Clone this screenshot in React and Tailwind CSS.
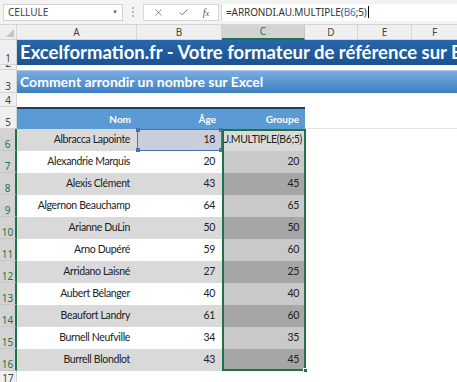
import { X, Check } from 'lucide-react';

const rows = [
  ['Albracca Lapointe', 18, null],
  ['Alexandrie Marquis', 20, 20],
  ['Alexis Clément', 43, 45],
  ['Algernon Beauchamp', 64, 65],
  ['Arianne DuLin', 50, 50],
  ['Arno Dupéré', 59, 60],
  ['Arridano Laisné', 27, 25],
  ['Aubert Bélanger', 40, 40],
  ['Beaufort Landry', 61, 60],
  ['Burnell Neufville', 34, 35],
  ['Burrell Blondlot', 43, 45],
];

const RowHead = ({ n, h, sel }) => (
  <div
    className={`w-[17px] shrink-0 flex items-end justify-center text-[10px] leading-none pb-[1px] overflow-hidden border-b border-r ${
      sel ? 'bg-[#d3d3d3] text-[#217346] border-b-[#c6c6c6] border-r-[#217346] border-r-2' : 'bg-[#efefef] text-[#444] border-[#d4d4d4]'
    } ${h}`}
  >
    {n}
  </div>
);

export default function App() {
  const cell = 'font-["Lato",sans-serif] text-[10.5px] tracking-[-0.35px] text-[#222]';
  return (
    <div className='w-[457px] h-[382px] overflow-hidden bg-white font-["Noto_Sans",sans-serif] select-none'>
      {/* formula toolbar */}
      <div className="h-[25px] bg-[#f3f3f3] flex items-center pl-[3px] gap-[2px] border-b border-[#d6d6d6]">
        <div className="w-[120px] h-[17px] bg-white border border-[#d0d0d0] flex items-center justify-between px-[4px]">
          <span className="text-[10px] text-[#444]">CELLULE</span>
          <span className="text-[6px] text-[#666]">▼</span>
        </div>
        <div className="w-[16px] flex flex-col items-center gap-[2px]">
          <span className="w-[2px] h-[2px] bg-[#b8b8b8]" />
          <span className="w-[2px] h-[2px] bg-[#b8b8b8]" />
          <span className="w-[2px] h-[2px] bg-[#b8b8b8]" />
        </div>
        <div className="w-[76px] h-[17px] bg-white border border-[#d8d8d8] flex items-center justify-around px-[2px] text-[#555]">
          <X size={11} strokeWidth={1.5} />
          <Check size={11} strokeWidth={1.8} />
          <span className="font-['Liberation_Serif',serif] italic text-[10px]">f<span className="text-[8px]">x</span></span>
        </div>
        <div className="flex-1 h-[17px] bg-white border-l border-[#d8d8d8] flex items-center pl-[4px] text-[10px] text-[#333] tracking-[-0.1px]">
          =ARRONDI.AU.MULTIPLE(<span className="text-[#3c6fbf]">B6</span>;5)
          <span className="w-px h-[12px] bg-black ml-[1px]" />
        </div>
      </div>

      {/* column headers */}
      <div className="h-[15px] flex text-[10px] text-[#444] bg-[#efefef]">
        <div className="w-[17px] border-r border-b border-[#d4d4d4] relative">
          <div className="absolute right-[2px] bottom-[2px] w-0 h-0 border-l-[8px] border-l-transparent border-b-[8px] border-b-[#c5c5c5]" />
        </div>
        <div className="w-[120px] flex items-center justify-center border-r border-b border-[#d4d4d4]">A</div>
        <div className="w-[85px] flex items-center justify-center border-r border-b border-[#d4d4d4]">B</div>
        <div className="w-[83px] flex items-center justify-center bg-[#d3d3d3] text-[#217346] border-r border-[#c6c6c6] border-b-2 border-b-[#217346]">C</div>
        <div className="w-[53px] flex items-center justify-center border-r border-b border-[#d4d4d4]">D</div>
        <div className="w-[54px] flex items-center justify-center border-r border-b border-[#d4d4d4]">E</div>
        <div className="flex-1 flex items-center justify-center border-b border-[#d4d4d4]">F</div>
      </div>

      {/* row 1 title */}
      <div className="flex">
        <RowHead n={1} h="h-[25px]" />
        <div className='flex-1 h-[25px] bg-gradient-to-b from-[#2767aa] to-[#1b5290] text-white font-["Lato",sans-serif] font-bold text-[18.5px] leading-[25px] pl-[3px] whitespace-nowrap overflow-hidden'>
          Excelformation.fr - Votre formateur de référence sur Excel
        </div>
      </div>
      {/* row 2 */}
      <div className="flex">
        <RowHead n={2} h="h-[5px]" />
        <div className="flex-1 h-[5px] bg-white" />
      </div>
      {/* row 3 */}
      <div className="flex">
        <RowHead n={3} h="h-[23px]" />
        <div className='flex-1 h-[23px] bg-gradient-to-b from-[#79aee0] to-[#3b7fc4] border-t border-[#a9c9ea] text-white font-["Lato",sans-serif] font-bold text-[14px] leading-[21px] pl-[3px] whitespace-nowrap overflow-hidden'>
          Comment arrondir un nombre sur Excel
        </div>
      </div>
      {/* row 4 */}
      <div className="flex">
        <RowHead n={4} h="h-[14px]" />
        <div className="flex-1 h-[14px] bg-white" />
      </div>
      {/* row 5 headers */}
      <div className="flex">
        <RowHead n={5} h="h-[22px]" />
        <div className='w-[288px] h-[22px] flex bg-[#5b9bd5] border-t-2 border-[#1f3f66] text-white font-bold font-["Lato",sans-serif] text-[10px]'>
          <div className="w-[120px] flex items-center justify-end pr-[6px]">Nom</div>
          <div className="w-[85px] flex items-center justify-end pr-[6px]">Âge</div>
          <div className="w-[83px] flex items-center justify-end pr-[6px]">Groupe</div>
        </div>
        <div className="flex-1 h-[22px] border-b border-[#e2e2e2]" />
      </div>

      {/* data rows + selection overlay */}
      <div className="relative">
        {rows.map(([name, age, grp], i) => {
          const even = i % 2 === 0;
          const abBg = even ? 'bg-[#d9d9d9]' : 'bg-white';
          const cBg = i === 0 ? 'bg-[#d9d9d9]' : even ? 'bg-[#a6a6a6]' : 'bg-[#c9c9c9]';
          return (
            <div key={i} className="flex">
              <RowHead n={6 + i} h="h-[22px]" sel />
              <div className={`w-[120px] h-[22px] ${abBg} ${cell} flex items-center justify-end pr-[7px]`}>{name}</div>
              {i === 0 ? (
                <div className={`w-[85px] h-[22px] bg-[#c9cfda] ${cell} flex items-center justify-end pr-[6px] relative border border-[#4a72b8]`}>
                  {age}
                  <span className="absolute -left-[2px] -top-[2px] w-[4px] h-[4px] bg-[#4a72b8]" />
                  <span className="absolute -right-[2px] -top-[2px] w-[4px] h-[4px] bg-[#4a72b8]" />
                  <span className="absolute -left-[2px] -bottom-[2px] w-[4px] h-[4px] bg-[#4a72b8]" />
                  <span className="absolute -right-[2px] -bottom-[2px] w-[4px] h-[4px] bg-[#4a72b8]" />
                </div>
              ) : (
                <div className={`w-[85px] h-[22px] ${abBg} ${cell} flex items-center justify-end pr-[7px]`}>{age}</div>
              )}
              <div className={`w-[83px] h-[22px] ${cBg} ${cell} flex items-center justify-end ${i === 0 ? 'pr-[3px]' : 'pr-[6px]'} overflow-hidden whitespace-nowrap`}>
                {i === 0 ? <span>=ARRONDI.AU.MULTIPLE(B6;5)</span> : grp}
              </div>
              <div className="flex-1 h-[22px] bg-white" />
            </div>
          );
        })}
        <div className="absolute left-[222px] top-0 w-[84px] h-[242px] border-2 border-[#217346] pointer-events-none">
          <span className="absolute -right-[4px] -bottom-[4px] w-[5px] h-[5px] bg-[#217346] border border-white" />
        </div>
        <div className="flex">
          <RowHead n={17} h="h-[14px]" />
          <div className="flex-1 h-[14px] bg-white" />
        </div>
      </div>
    </div>
  );
}
